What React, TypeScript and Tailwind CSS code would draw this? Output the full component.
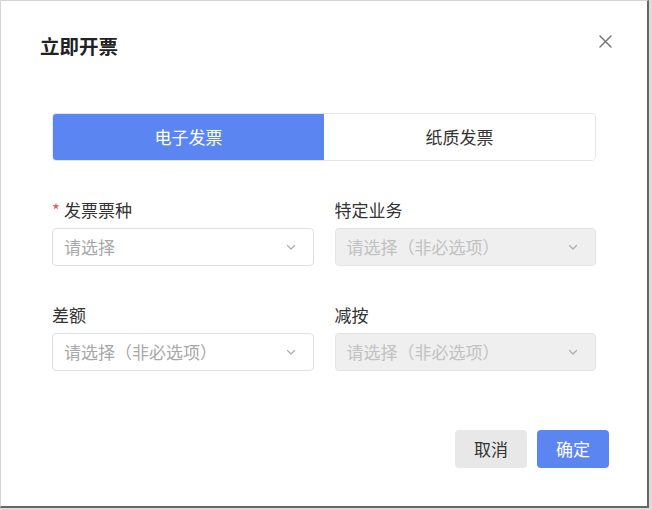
import { useState } from "react";

function Chevron() {
  return (
    <svg width="12" height="12" viewBox="0 0 12 12" fill="none" className="shrink-0">
      <path d="M2.5 4.5 6 8l3.5-3.5" stroke="#a8abb2" strokeWidth="1.2" strokeLinecap="round" strokeLinejoin="round" />
    </svg>
  );
}

function Select({ placeholder, disabled }: { placeholder: string; disabled?: boolean }) {
  return (
    <div
      className={
        disabled
          ? "flex h-[38px] items-center justify-between rounded-[4px] border border-[#e4e4e4] bg-[#efefef] pl-[11px] pr-[16px]"
          : "flex h-[38px] items-center justify-between rounded-[4px] border border-[#dcdfe6] bg-white pl-[11px] pr-[16px]"
      }
    >
      <span className={disabled ? "text-[17px] text-[#c2c2c2]" : "text-[17px] text-[#a8a8a8]"}>{placeholder}</span>
      <Chevron />
    </div>
  );
}

export default function App() {
  const [tab, setTab] = useState(0);

  return (
    <div
      className="w-[652px] h-[510px] bg-[#dcdcdc] overflow-hidden"
      style={{ fontFamily: '"Noto Sans CJK SC", "Noto Sans", sans-serif' }}
    >
      <div className="flex h-[508px] w-[649px] flex-col border-l border-t border-[#d4d4d4] border-r-2 border-b-2 border-r-[#666] border-b-[#666] bg-white">
        {/* header */}
        <div className="flex items-start justify-between pl-[39px] pr-[35px] pt-[31px]">
          <h1 className="text-[19.5px] font-bold leading-[28px] text-[#222]">立即开票</h1>
          <button className="mt-[3px] text-[#777]">
            <svg width="13" height="13" viewBox="0 0 13 13" fill="none">
              <path d="M1 1l11 11M12 1 1 12" stroke="currentColor" strokeWidth="1.5" strokeLinecap="round" />
            </svg>
          </button>
        </div>

        {/* body */}
        <div className="px-[51px] pt-[53px]">
          <div className="flex h-[48px] overflow-hidden rounded-[4px] border border-[#e6e6e6]">
            {["电子发票", "纸质发票"].map((t, i) => (
              <button
                key={t}
                onClick={() => setTab(i)}
                className={
                  tab === i
                    ? "flex flex-1 items-center justify-center bg-[#5b86f2] text-[17px] text-white"
                    : "flex flex-1 items-center justify-center bg-white text-[17px] text-[#333]"
                }
              >
                {t}
              </button>
            ))}
          </div>

          <div className="mt-[38px] grid grid-cols-2 gap-x-[21px] gap-y-[38px]">
            <div className="flex flex-col gap-[7px]">
              <label className="text-[17px] leading-[22px] text-[#333]">
                <span className="mr-[4px] text-[#e35757]">*</span>发票票种
              </label>
              <Select placeholder="请选择" />
            </div>
            <div className="flex flex-col gap-[7px]">
              <label className="text-[17px] leading-[22px] text-[#333]">特定业务</label>
              <Select placeholder="请选择（非必选项）" disabled />
            </div>
            <div className="flex flex-col gap-[7px]">
              <label className="text-[17px] leading-[22px] text-[#333]">差额</label>
              <Select placeholder="请选择（非必选项）" />
            </div>
            <div className="flex flex-col gap-[7px]">
              <label className="text-[17px] leading-[22px] text-[#333]">减按</label>
              <Select placeholder="请选择（非必选项）" disabled />
            </div>
          </div>
        </div>

        {/* footer */}
        <div className="mt-auto flex justify-end gap-[10px] pb-[38px] pr-[38px]">
          <button className="h-[38px] w-[72px] rounded-[4px] bg-[#e8e8e8] text-[17px] text-[#333]">取消</button>
          <button className="h-[38px] w-[72px] rounded-[4px] bg-[#5b86f2] text-[17px] text-white">确定</button>
        </div>
      </div>
    </div>
  );
}
